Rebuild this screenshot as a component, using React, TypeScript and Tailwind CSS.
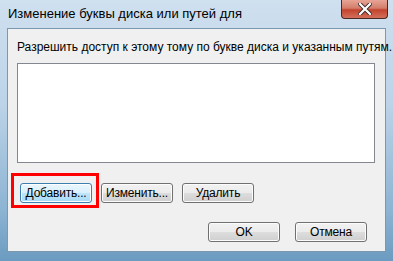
function Btn({ label, focused }: { label: string; focused?: boolean }) {
  return (
    <button
      className={
        focused
          ? "w-[72px] h-[20px] rounded-[3px] border border-[#3c7fb1] bg-[linear-gradient(#eaf6fd_0%,#d9f0fc_50%,#bee6fd_51%,#a7d9f5_100%)] text-[12px] tracking-[-0.2px] leading-none text-black shadow-[inset_0_0_0_1px_#fff]"
          : "w-[72px] h-[20px] rounded-[3px] border border-[#707070] bg-[linear-gradient(#f2f2f2_0%,#ebebeb_50%,#dddddd_51%,#cfcfcf_100%)] text-[12px] tracking-[-0.2px] leading-none text-black shadow-[inset_0_0_0_1px_#fcfcfc]"
      }
    >
      {label}
    </button>
  );
}

export default function App() {
  return (
    <div className="w-[393px] h-[261px] overflow-hidden bg-[linear-gradient(#cfe0ef_0%,#bcd3e8_40%,#8db4d3_80%,#6b9bc0_100%)] flex flex-col px-[7px] pb-[9px] font-['Liberation_Sans',Arial,sans-serif]">
      {/* title bar */}
      <div className="h-[28px] flex items-start justify-between">
        <span className="pl-[1px] pt-[4px] text-[13px] text-black">
          Изменение буквы диска или путей для
        </span>
        <div className="mr-[-2px] w-[47px] h-[19px] rounded-b-[4px] border border-t-0 border-[#4a2a26] bg-[linear-gradient(#e7a596_0%,#d47d6b_45%,#c2432d_55%,#d3705b_100%)] flex items-center justify-center">
          <svg width="14" height="12" viewBox="0 0 14 12">
            <path d="M2 1 L12 11 M12 1 L2 11" stroke="#3a2a2a" strokeWidth="4" strokeLinecap="square" />
            <path d="M2 1 L12 11 M12 1 L2 11" stroke="#ffffff" strokeWidth="2.2" strokeLinecap="square" />
          </svg>
        </div>
      </div>

      {/* client area */}
      <div className="relative flex-1 border border-[#7a98b0] bg-[#f0f0f0] flex flex-col pl-[9px] pr-[10px]">
        <p className="pt-[9px] text-[12px] text-black whitespace-nowrap">
          Разрешить доступ к этому тому по букве диска и указанным путям.
        </p>
        <div className="mt-[7px] h-[100px] border border-[#828790] bg-white" />
        <div className="mt-[20px] ml-[3px] flex gap-[9px]">
          <Btn label="Добавить..." focused />
          <Btn label="Изменить..." />
          <Btn label="Удалить" />
        </div>
        <div className="mt-[19px] flex justify-end gap-[15px] pr-[8px]">
          <Btn label="OK" />
          <Btn label="Отмена" />
        </div>
        {/* red highlight */}
        <div className="absolute left-[3px] top-[144px] w-[88px] h-[35px] border-[3px] border-[#ff0000]" />
      </div>
    </div>
  );
}
